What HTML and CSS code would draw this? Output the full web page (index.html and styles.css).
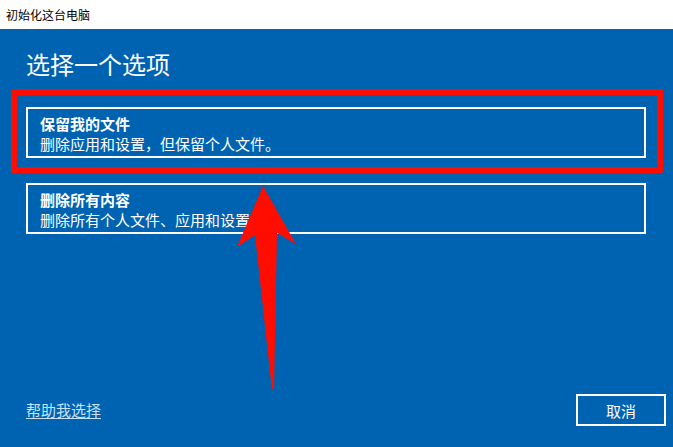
FILE: index.html
```html
<!DOCTYPE html>
<html lang="zh-CN">
<head>
<meta charset="utf-8">
<title>初始化这台电脑</title>
<link rel="stylesheet" href="styles.css">
</head>
<body>
<div class="window">
  <div class="titlebar">初始化这台电脑</div>
  <div class="content">
    <h1 class="heading">选择一个选项</h1>
    <div class="options">
      <div class="option">
        <div class="option-title">保留我的文件</div>
        <div class="option-desc">删除应用和设置，但保留个人文件。</div>
      </div>
      <div class="option">
        <div class="option-title">删除所有内容</div>
        <div class="option-desc">删除所有个人文件、应用和设置。</div>
      </div>
    </div>
    <div class="footer">
      <a class="help" href="#">帮助我选择</a>
      <button class="cancel">取消</button>
    </div>
  </div>
  <div class="highlight"></div>
  <svg class="arrow" width="673" height="447" viewBox="0 0 673 447">
    <polygon points="263,186 296,244 277,233 274,388 272,390 255,235 237,247" fill="#ff0d00"/>
  </svg>
</div>
</body>
</html>
```
FILE: styles.css
```css
* { box-sizing: border-box; }
html, body { margin: 0; padding: 0; }
body {
  font-family: "Noto Sans CJK SC", "Noto Sans", sans-serif;
  background: #0063b1;
}
.window {
  position: relative;
  width: 673px;
  height: 447px;
  display: flex;
  flex-direction: column;
  overflow: hidden;
}
.titlebar {
  height: 29px;
  background: #fff;
  color: #000;
  font-size: 12px;
  line-height: 29px;
  padding-left: 6px;
}
.content {
  flex: 1;
  background: #0063b1;
  color: #fff;
  display: flex;
  flex-direction: column;
  padding: 0 0 21px 26px;
}
.heading {
  margin: 19px 0 0 0;
  font-size: 24px;
  line-height: 32px;
  font-weight: normal;
}
.options {
  margin-top: 27px;
  margin-right: 27px;
  display: flex;
  flex-direction: column;
  gap: 25px;
}
.option {
  height: 51px;
  border: 2px solid #fff;
  padding: 5px 12px 0 12px;
  font-size: 15px;
  line-height: 20px;
}
.option-title { font-weight: bold; }
.footer {
  margin-top: auto;
  display: flex;
  justify-content: space-between;
  align-items: center;
  padding-right: 7px;
}
.help {
  color: #c8e1f6;
  font-size: 15px;
  line-height: 20px;
  text-decoration: underline;
  text-underline-offset: 2px;
}
.cancel {
  width: 90px;
  height: 32px;
  border: 2px solid #fff;
  background: transparent;
  color: #fff;
  font-family: inherit;
  font-size: 15px;
  padding: 0;
}
.highlight {
  position: absolute;
  left: 11px;
  top: 89px;
  width: 652px;
  height: 84px;
  border: 6px solid #ff0d00;
  border-radius: 2px;
}
.arrow {
  position: absolute;
  left: 0;
  top: 0;
}
```
